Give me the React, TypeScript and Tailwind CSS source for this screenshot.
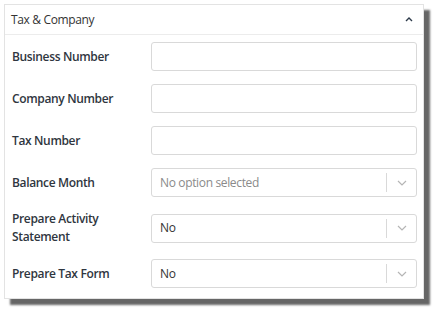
import React from "react";

function Chevron() {
  return (
    <svg width="10" height="6" viewBox="0 0 10 6" fill="none">
      <path d="M1 1l4 4 4-4" stroke="#b5b5b5" strokeWidth="1.2" />
    </svg>
  );
}

function Select({ value, placeholder }: { value?: string; placeholder?: string }) {
  return (
    <div className="h-[29px] border border-[#d9d9d9] rounded-[3px] bg-white flex items-center">
      <div className={"flex-1 pl-[8px] " + (value ? "text-[#333333]" : "text-[#8a8a8a]")}>
        {value ?? placeholder}
      </div>
      <div className="w-px h-[19px] bg-[#d9d9d9]" />
      <div className="w-[29px] flex items-center justify-center">
        <Chevron />
      </div>
    </div>
  );
}

function Input() {
  return <div className="h-[29px] border border-[#d9d9d9] rounded-[3px] bg-white" />;
}

function Row({ label, children }: { label: React.ReactNode; children: React.ReactNode }) {
  return (
    <div className="grid grid-cols-[140px_1fr] items-center min-h-[29px]">
      <div className="font-semibold text-[#2f3640] leading-[18px] pl-[1px]">{label}</div>
      {children}
    </div>
  );
}

export default function App() {
  return (
    <div className="w-[438px] h-[311px] bg-white pt-[4px] pl-[4px]" style={{ fontFamily: '"Open Sans", sans-serif' }}>
      <div className="w-[420px] h-[295px] border border-[#e3e3e3] bg-white shadow-[6px_6px_2px_rgba(0,0,0,0.6)] text-[12px] tracking-[-0.35px]">
        <div className="h-[30px] border-b border-[#ececec] flex items-center justify-between pl-[6px] pr-[10px] text-[#333333]">
          <span>Tax &amp; Company</span>
          <svg width="8" height="5" viewBox="0 0 8 5" fill="none">
            <path d="M1 4l3-3 3 3" stroke="#2d3a4a" strokeWidth="1.4" />
          </svg>
        </div>
        <div className="pl-[6px] pr-[6px] pt-[7px] flex flex-col gap-[13px]">
          <Row label="Business Number"><Input /></Row>
          <Row label="Company Number"><Input /></Row>
          <Row label="Tax Number"><Input /></Row>
          <Row label="Balance Month"><Select placeholder="No option selected" /></Row>
          <Row label={<>Prepare Activity<br />Statement</>}><Select value="No" /></Row>
          <Row label="Prepare Tax Form"><Select value="No" /></Row>
        </div>
      </div>
    </div>
  );
}
